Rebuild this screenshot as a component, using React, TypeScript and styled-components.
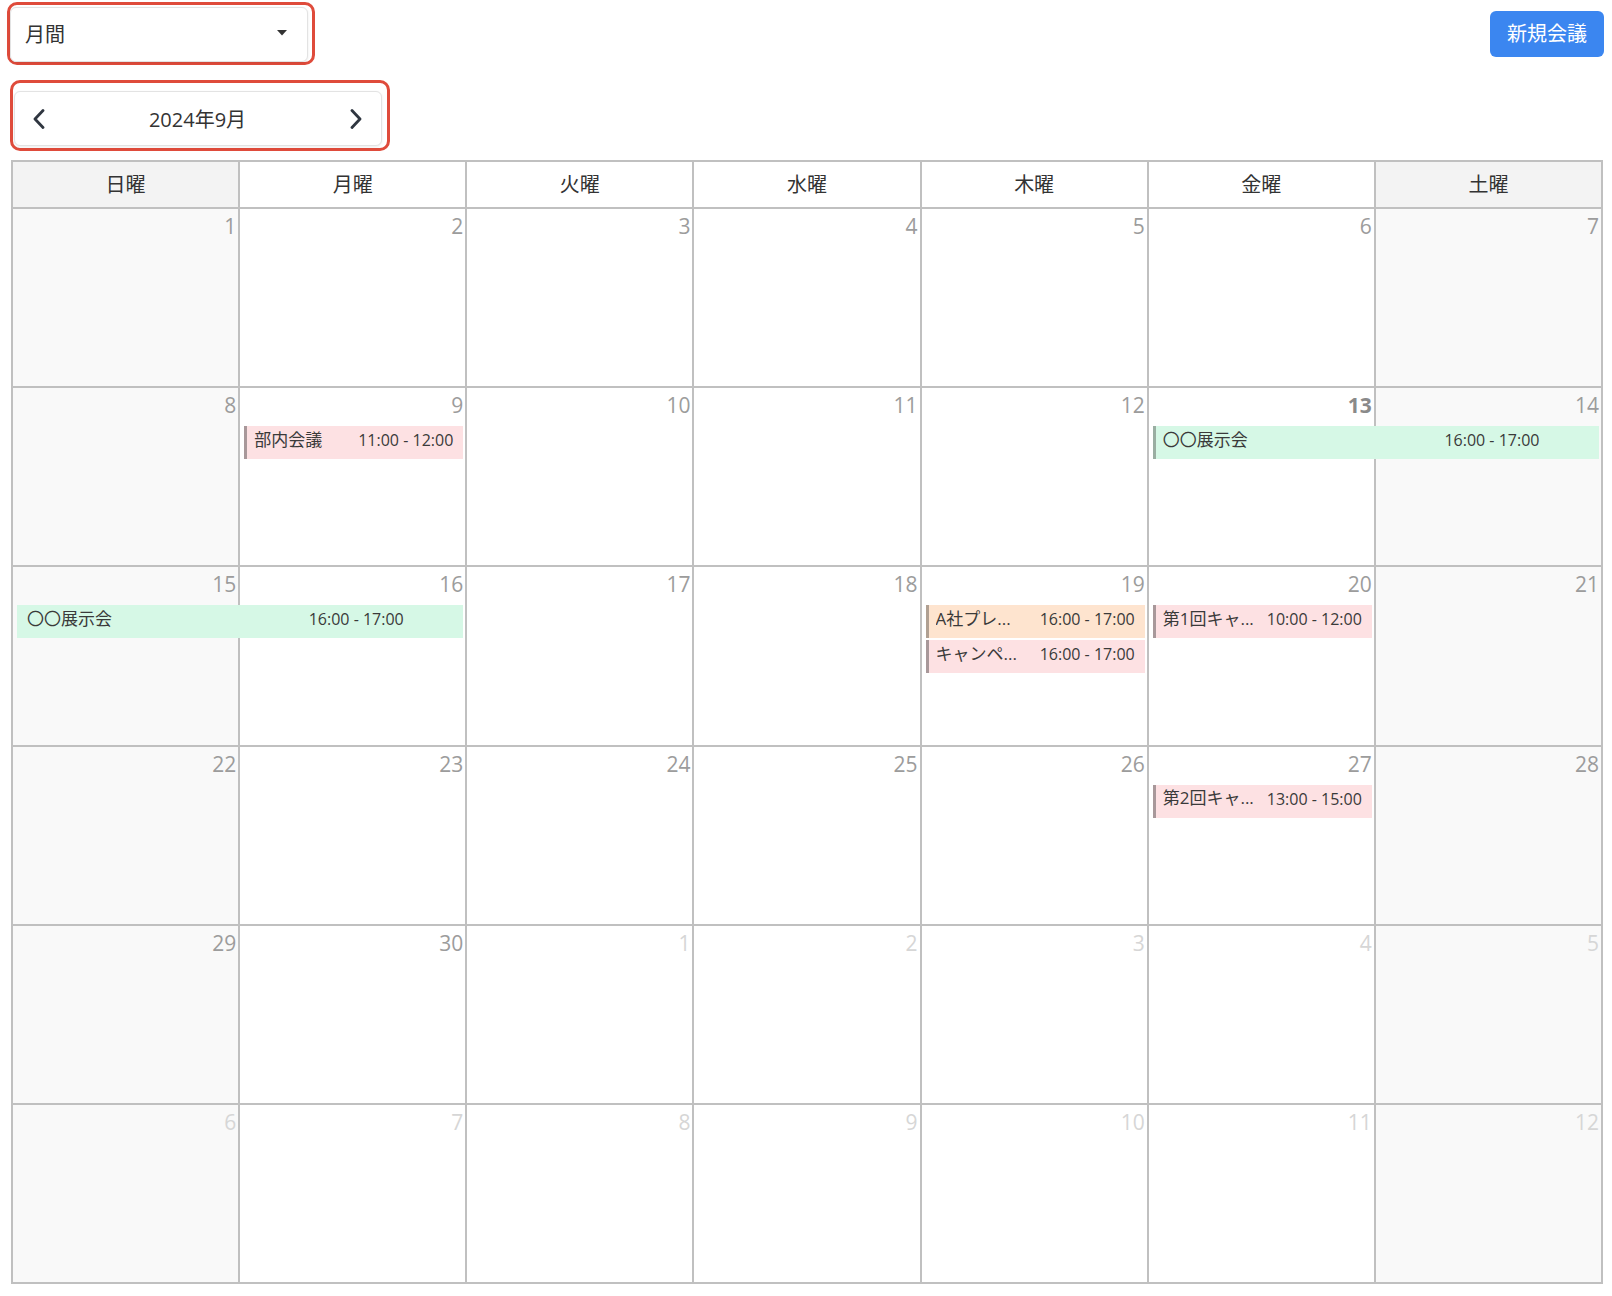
import styled, { createGlobalStyle } from 'styled-components'

const GlobalStyle = createGlobalStyle`
  body {
    margin: 0;
    background: #fff;
    color: #333;
    font-family: "Open Sans", "Noto Sans CJK JP", sans-serif;
  }
`

const LINE = '2px solid #c0c0c0'

const Page = styled.div`
  padding: 2px 8px 0 7px;
`

const TopBar = styled.div`
  display: flex;
  justify-content: space-between;
  align-items: flex-start;
`

const Controls = styled.div`
  display: flex;
  flex-direction: column;
  align-items: flex-start;
  gap: 15px;
`

// red annotation frame round a control
const Highlight = styled.div<{ $pad: string; $shift?: number }>`
  border: 3px solid #df4b3b;
  border-radius: 10px;
  padding: ${(p) => p.$pad};
  margin-left: ${(p) => p.$shift ?? 0}px;
`

const Box = styled.div<{ $w: number }>`
  box-sizing: border-box;
  width: ${(p) => p.$w}px;
  height: 55px;
  display: flex;
  align-items: center;
  justify-content: space-between;
  border: 1px solid #e3e3e3;
  border-radius: 6px;
  box-shadow: 0 1px 3px rgba(0, 0, 0, 0.08);
  background: #fff;
  font-size: 20px;
  color: #333;
`

const SelectBox = styled(Box)`
  padding: 0 20px 3px 14px;
`

const NavBox = styled(Box)`
  padding: 0 19px 0 18px;
`

const NavButton = styled.button`
  display: flex;
  padding: 0;
  border: none;
  background: none;
  color: #333;
  cursor: pointer;
`

const NewButton = styled.button`
  margin-top: 9px;
  height: 46px;
  padding: 0 17px 3px;
  border: none;
  border-radius: 6px;
  background: #3b86f0;
  color: #fff;
  font-family: inherit;
  font-size: 20px;
`

const Calendar = styled.div`
  box-sizing: border-box;
  width: 1592px;
  height: 1124px;
  margin: 9px 0 0 4px;
  display: flex;
  flex-direction: column;
  border-top: ${LINE};
  border-left: ${LINE};
`

const HeaderRow = styled.div`
  display: grid;
  grid-template-columns: repeat(7, 1fr);
  height: 47px;
`

const HeaderCell = styled.div<{ $weekend: boolean }>`
  display: flex;
  align-items: center;
  justify-content: center;
  padding-bottom: 2px;
  border-right: ${LINE};
  border-bottom: ${LINE};
  background: ${(p) => (p.$weekend ? '#f3f3f3' : '#fff')};
  font-size: 20px;
  color: #333;
`

const Week = styled.div`
  flex: 1;
  display: grid;
  grid-template-columns: repeat(7, 1fr);
  grid-template-rows: 36px auto auto 1fr;
  min-height: 0;
`

const DayCell = styled.div<{ $col: number; $weekend: boolean; $muted: boolean; $today: boolean }>`
  grid-row: 1 / -1;
  grid-column: ${(p) => p.$col + 1};
  border-right: ${LINE};
  border-bottom: ${LINE};
  background: ${(p) => (p.$weekend ? '#f9f9f9' : '#fff')};
  padding: 5px 2px 0 0;
  text-align: right;
  font-size: 21px;
  line-height: 25px;
  font-weight: ${(p) => (p.$today ? 700 : 400)};
  color: ${(p) => (p.$muted ? '#d6d6d6' : p.$today ? '#8a8a8a' : '#9c9c9c')};
`

const palette = {
  pink: { bg: '#fde1e3', bar: '#a8989a' },
  green: { bg: '#d6f8e6', bar: '#9aaea2' },
  orange: { bg: '#fee4cf', bar: '#b0a092' },
}

type Tone = keyof typeof palette

const EventBar = styled.div<{ $col: number; $span: number; $row: number; $tone: Tone; $bar: boolean }>`
  grid-row: ${(p) => p.$row + 2};
  grid-column: ${(p) => p.$col + 1} / span ${(p) => p.$span};
  height: 33px;
  margin: 2px 4px 0 4px;
  display: grid;
  grid-template-columns: ${(p) => (p.$span > 1 ? `repeat(${p.$span}, 1fr)` : '1fr auto')};
  align-items: center;
  column-gap: 8px;
  box-sizing: border-box;
  padding: 0 ${(p) => (p.$span > 1 ? 0 : 10)}px 5px 7px;
  border-left: 3px solid ${(p) => (p.$bar ? palette[p.$tone].bar : 'transparent')};
  background: ${(p) => palette[p.$tone].bg};
  color: #3a3a3a;
`

const EventTitle = styled.span`
  min-width: 0;
  margin-bottom: 4px;
  overflow: hidden;
  white-space: nowrap;
  text-overflow: ellipsis;
  font-size: 17px;
`

const EventTime = styled.span<{ $center: boolean }>`
  justify-self: ${(p) => (p.$center ? 'center' : 'end')};
  white-space: nowrap;
  font-size: 16px;
`

const Chevron = ({ dir }: { dir: 'left' | 'right' }) => (
  <svg width="12" height="20" viewBox="0 0 12 20" fill="none">
    <polyline
      points={dir === 'left' ? '10,1.5 2,10 10,18.5' : '2,1.5 10,10 2,18.5'}
      stroke="#2f3640"
      strokeWidth="2.8"
      strokeLinecap="round"
      strokeLinejoin="round"
    />
  </svg>
)

const Caret = () => (
  <svg width="10" height="6" viewBox="0 0 10 6">
    <polygon points="0,0 10,0 5,5.5" fill="#333" />
  </svg>
)

const DAYS = ['日曜', '月曜', '火曜', '水曜', '木曜', '金曜', '土曜']

type Ev = { col: number; span: number; row: number; title: string; time: string; tone: Tone; bar?: boolean }

const weeks: { days: { n: number; muted?: boolean }[]; events: Ev[] }[] = [
  { days: [1, 2, 3, 4, 5, 6, 7].map((n) => ({ n })), events: [] },
  {
    days: [8, 9, 10, 11, 12, 13, 14].map((n) => ({ n })),
    events: [
      { col: 1, span: 1, row: 0, title: '部内会議', time: '11:00 - 12:00', tone: 'pink' },
      { col: 5, span: 2, row: 0, title: '〇〇展示会', time: '16:00 - 17:00', tone: 'green' },
    ],
  },
  {
    days: [15, 16, 17, 18, 19, 20, 21].map((n) => ({ n })),
    events: [
      { col: 0, span: 2, row: 0, title: '〇〇展示会', time: '16:00 - 17:00', tone: 'green', bar: false },
      { col: 4, span: 1, row: 0, title: 'A社プレ...', time: '16:00 - 17:00', tone: 'orange' },
      { col: 4, span: 1, row: 1, title: 'キャンペ...', time: '16:00 - 17:00', tone: 'pink' },
      { col: 5, span: 1, row: 0, title: '第1回キャ...', time: '10:00 - 12:00', tone: 'pink' },
    ],
  },
  {
    days: [22, 23, 24, 25, 26, 27, 28].map((n) => ({ n })),
    events: [{ col: 5, span: 1, row: 0, title: '第2回キャ...', time: '13:00 - 15:00', tone: 'pink' }],
  },
  {
    days: [{ n: 29 }, { n: 30 }, ...[1, 2, 3, 4, 5].map((n) => ({ n, muted: true }))],
    events: [],
  },
  { days: [6, 7, 8, 9, 10, 11, 12].map((n) => ({ n, muted: true })), events: [] },
]

const TODAY = 13

export default function App() {
  return (
    <Page>
      <GlobalStyle />
      <TopBar>
        <Controls>
          <Highlight $pad="2px 4px 0 0">
            <SelectBox $w={298}>
              <span>月間</span>
              <Caret />
            </SelectBox>
          </Highlight>
          <Highlight $pad="8px 5px 2px 1px" $shift={3}>
            <NavBox $w={368}>
              <NavButton>
                <Chevron dir="left" />
              </NavButton>
              <span>2024年9月</span>
              <NavButton>
                <Chevron dir="right" />
              </NavButton>
            </NavBox>
          </Highlight>
        </Controls>
        <NewButton>新規会議</NewButton>
      </TopBar>

      <Calendar>
        <HeaderRow>
          {DAYS.map((d, i) => (
            <HeaderCell key={d} $weekend={i === 0 || i === 6}>
              {d}
            </HeaderCell>
          ))}
        </HeaderRow>
        {weeks.map((w, wi) => (
          <Week key={wi}>
            {w.days.map((d, i) => (
              <DayCell
                key={i}
                $col={i}
                $weekend={i === 0 || i === 6}
                $muted={!!d.muted}
                $today={!d.muted && d.n === TODAY}
              >
                {d.n}
              </DayCell>
            ))}
            {w.events.map((e, ei) => (
              <EventBar
                key={ei}
                $col={e.col}
                $span={e.span}
                $row={e.row}
                $tone={e.tone}
                $bar={e.bar !== false}
              >
                <EventTitle>{e.title}</EventTitle>
                <EventTime $center={e.span > 1}>{e.time}</EventTime>
              </EventBar>
            ))}
          </Week>
        ))}
      </Calendar>
    </Page>
  )
}
